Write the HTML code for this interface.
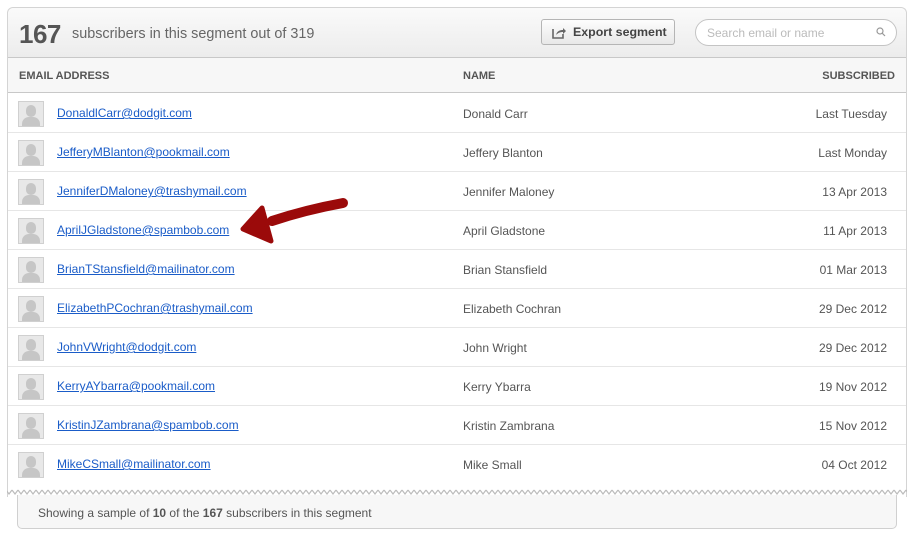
<!DOCTYPE html>
<html><head><style>
*{margin:0;padding:0;box-sizing:border-box}
body{width:912px;height:536px;background:#fff;font-family:"Liberation Sans",sans-serif;position:relative;overflow:hidden}
.box{position:absolute;left:7px;top:7px;width:900px;height:490px;border:1px solid #d4d4d4;border-bottom:none;border-radius:6px 6px 0 0}
.hdr{position:absolute;left:8px;top:8px;width:898px;height:50px;background:linear-gradient(#fafafa,#ececec);border-bottom:1px solid #c8c8c8;border-radius:6px 6px 0 0}
.big{position:absolute;left:19px;top:19px;font-size:26px;font-weight:bold;color:#555;letter-spacing:-0.5px}
.sub{position:absolute;left:72px;top:26px;font-size:14.4px;color:#666}
.btn{position:absolute;left:541px;top:19px;width:134px;height:26px;border:1px solid #b5b5b5;border-radius:3px;background:linear-gradient(#fdfdfd,#e8e8e8);font-size:12.4px;font-weight:bold;color:#444;padding:5px 0 0 31px}
.srch{position:absolute;left:695px;top:19px;width:202px;height:27px;border:1px solid #c4c4c4;border-radius:14px;background:#fff;font-size:12px;color:#bbb;padding:6px 0 0 11px}
.col{position:absolute;top:58px;left:8px;width:898px;height:35px;background:#f7f7f7;border-bottom:1px solid #c8c8c8}
.ch{position:absolute;top:70px;font-size:11px;font-weight:bold;color:#555}
.row{position:absolute;left:8px;width:898px;height:39px;border-bottom:1px solid #e6e6e6}
.av{position:absolute;left:10px;top:7px;width:26px;height:26px;border:1px solid #d0d0d0;background:#e8e8e8;overflow:hidden}
.av:before{content:"";position:absolute;left:7px;top:3px;width:10px;height:12px;border-radius:5px;background:#c6c6c6}
.av:after{content:"";position:absolute;left:3px;top:15px;width:18px;height:14px;border-radius:7px 7px 0 0;background:#c6c6c6}
.em{position:absolute;left:49px;top:12px;font-size:12px;color:#1a5cc8;text-decoration:underline}
.nm{position:absolute;left:455px;top:13px;font-size:12px;color:#555}
.dt{position:absolute;right:19px;top:13px;font-size:12px;color:#555}
.foot{position:absolute;left:17px;top:495px;width:880px;height:34px;border:1px solid #d0d0d0;border-top:none;border-radius:0 0 5px 5px;background:#f7f7f7;font-size:12px;color:#555;padding:11px 0 0 20px}
</style></head><body>
<div class="box"></div>
<div class="hdr"></div>
<div class="big">167</div>
<div class="sub">subscribers in this segment out of 319</div>
<div class="btn"><svg style="position:absolute;left:10px;top:6px" width="14" height="13" viewBox="0 0 14 13"><path d="M1 3v9h10V8" fill="none" stroke="#666" stroke-width="1.6"/><path d="M4 9c1-4 4-5 7-5V2l3 3-3 3V6c-3 0-5 1-7 3z" fill="#666"/></svg>Export segment</div>
<div class="srch">Search email or name<svg style="position:absolute;right:10px;top:7px" width="10" height="10" viewBox="0 0 10 10"><circle cx="4" cy="4" r="3" fill="none" stroke="#999" stroke-width="1.2"/><path d="M6.2 6.2 9 9" stroke="#999" stroke-width="1.2"/></svg></div>
<div class="col"></div>
<div class="ch" style="left:19px">EMAIL ADDRESS</div>
<div class="ch" style="left:463px">NAME</div>
<div class="ch" style="right:17px">SUBSCRIBED</div>

<div class="row" style="top:94px"><div class="av"></div><div class="em">DonaldlCarr@dodgit.com</div><div class="nm">Donald Carr</div><div class="dt">Last Tuesday</div></div>
<div class="row" style="top:133px"><div class="av"></div><div class="em">JefferyMBlanton@pookmail.com</div><div class="nm">Jeffery Blanton</div><div class="dt">Last Monday</div></div>
<div class="row" style="top:172px"><div class="av"></div><div class="em">JenniferDMaloney@trashymail.com</div><div class="nm">Jennifer Maloney</div><div class="dt">13 Apr 2013</div></div>
<div class="row" style="top:211px"><div class="av"></div><div class="em">AprilJGladstone@spambob.com</div><div class="nm">April Gladstone</div><div class="dt">11 Apr 2013</div></div>
<div class="row" style="top:250px"><div class="av"></div><div class="em">BrianTStansfield@mailinator.com</div><div class="nm">Brian Stansfield</div><div class="dt">01 Mar 2013</div></div>
<div class="row" style="top:289px"><div class="av"></div><div class="em">ElizabethPCochran@trashymail.com</div><div class="nm">Elizabeth Cochran</div><div class="dt">29 Dec 2012</div></div>
<div class="row" style="top:328px"><div class="av"></div><div class="em">JohnVWright@dodgit.com</div><div class="nm">John Wright</div><div class="dt">29 Dec 2012</div></div>
<div class="row" style="top:367px"><div class="av"></div><div class="em">KerryAYbarra@pookmail.com</div><div class="nm">Kerry Ybarra</div><div class="dt">19 Nov 2012</div></div>
<div class="row" style="top:406px"><div class="av"></div><div class="em">KristinJZambrana@spambob.com</div><div class="nm">Kristin Zambrana</div><div class="dt">15 Nov 2012</div></div>
<div class="row" style="top:445px;border-bottom:none"><div class="av"></div><div class="em">MikeCSmall@mailinator.com</div><div class="nm">Mike Small</div><div class="dt">04 Oct 2012</div></div>

<svg style="position:absolute;left:0;top:488px" width="912" height="10"><defs><pattern id="z" width="6" height="10" patternUnits="userSpaceOnUse"><path d="M0 2 3 6 6 2" fill="none" stroke="#bbb" stroke-width="1.2"/></pattern></defs><rect x="7" y="0" width="900" height="10" fill="url(#z)"/></svg>
<div class="foot">Showing a sample of <b>10</b> of the <b>167</b> subscribers in this segment</div>

<svg style="position:absolute;left:0;top:0" width="912" height="536"><g fill="#9b0a0a" stroke="#9b0a0a" stroke-linejoin="round"><path d="M343 203 Q305 210 272 221" fill="none" stroke-width="10" stroke-linecap="round"/><path d="M243 229 L262 208 L271 241 Z" stroke-width="5"/></g></svg>
</body></html>
